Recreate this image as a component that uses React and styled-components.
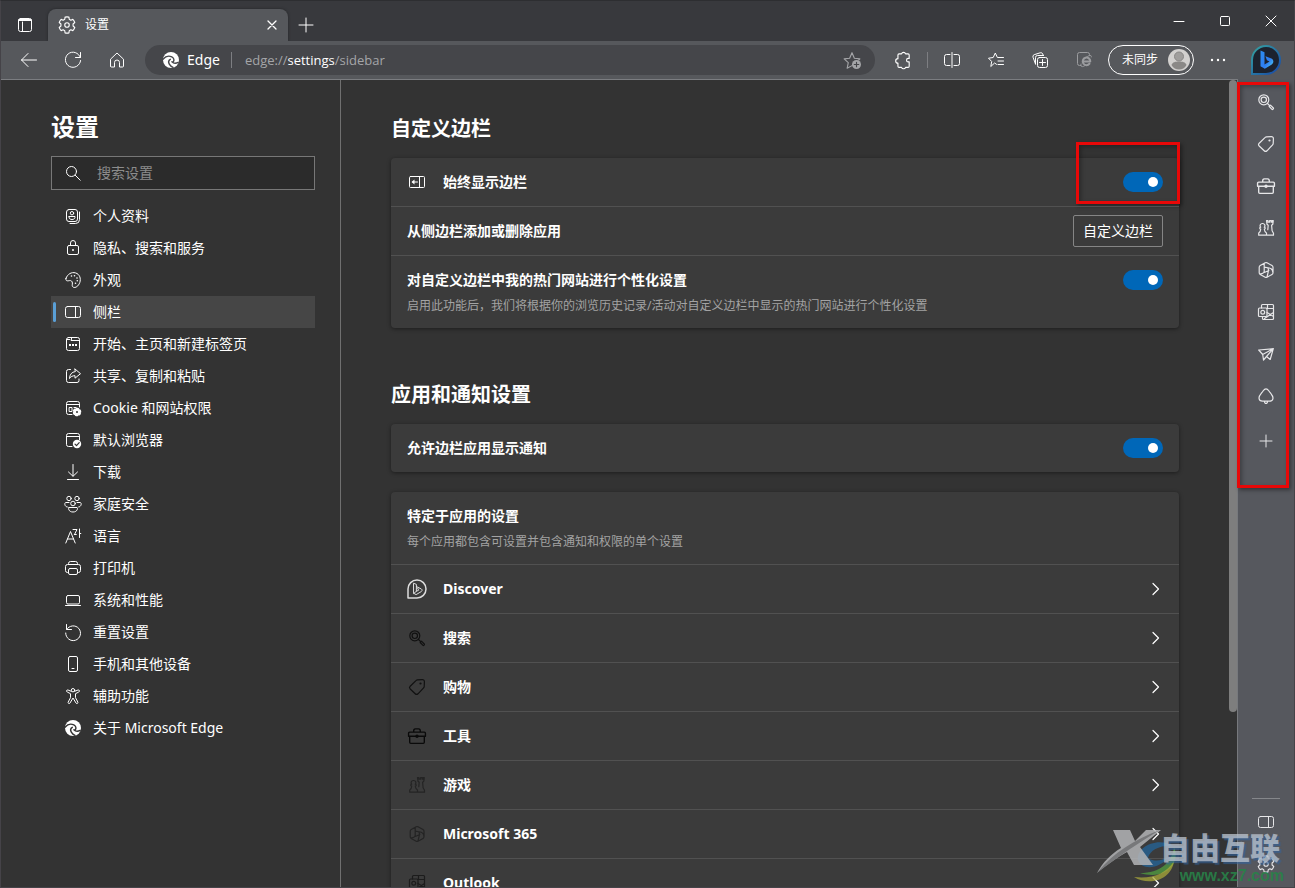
import React from "react";
import styled, { createGlobalStyle, css } from "styled-components";

const GlobalStyle = createGlobalStyle`
  * { box-sizing: border-box; }
  body {
    margin: 0;
    background: #333333;
    color: #ffffff;
    font-family: "Noto Sans", "Noto Sans CJK SC", sans-serif;
    font-size: 14px;
    line-height: 20px;
  }
  button, input { font: inherit; color: inherit; }
  button { border: 0; padding: 0; background: none; cursor: pointer; }
  h1, h2, ul, p { margin: 0; padding: 0; }
  ul { list-style: none; }
  a { color: inherit; text-decoration: none; }
`;

/* ---------- icons ---------- */

const Svg = styled.svg`
  display: block;
  flex: none;
  fill: none;
  stroke: currentColor;
  stroke-width: ${(p) => p.$w || 1};
  stroke-linecap: round;
  stroke-linejoin: round;
  .fill { fill: currentColor; stroke: none; }
  .cut { stroke: ${(p) => p.$cut || "#333333"}; }
`;

const gearPath =
  "M8 .8c.6 0 1.1.1 1.7.2l.3 1.9 1.4.8 1.8-.7c.8.8 1.3 1.7 1.7 2.8l-1.5 1.3v1.8l1.5 1.3c-.4 1.1-.9 2-1.7 2.8l-1.8-.7-1.4.8-.3 1.9c-1.1.3-2.300.3-3.400 0l-.3-1.900-1.400-.8-1.800.7c-.8-.8-1.300-1.700-1.700-2.800l1.500-1.300v-1.800l-1.500-1.300c.4-1.100.9-2 1.700-2.800l1.800.7 1.400-.8.3-1.900c.6-.1 1.100-.2 1.700-.2z";

const glyphs = {
  gear: (
    <>
      <path d={gearPath} />
      <circle cx="8" cy="8" r="2" />
    </>
  ),
  tabs: (
    <>
      <rect x="1.500" y="1.500" width="13" height="13" rx="2" />
      <path d="M1.500 3.500h13M2 2.500h12M5.500 5v9.500" />
    </>
  ),
  close: <path d="M4 4l8 8M12 4l-8 8" />,
  winClose: <path d="M3 3l10 10M13 3L3 13" />,
  plus: <path d="M8 1v14M1 8h14" />,
  smallPlus: <path d="M8 2v12M2 8h12" />,
  min: <path d="M3 8.500h10" />,
  max: <rect x="3.500" y="3.500" width="9" height="9" rx="1" />,
  back: <path d="M15.500 8H.5M7 1.500L.5 8 7 14.500" />,
  reload: <path d="M15.300 5.500A7.600 7.600 0 1 0 15.600 8.500M15.500.5v5h-5" />,
  home: <path d="M1.500 14V7.200L8 1l6.500 6.200V14a1 1 0 0 1-1 1h-3v-4.500a2.500 2.500 0 0 0-5 0V15h-3a1 1 0 0 1-1-1z" />,
  edge: (
    <>
      <circle className="fill" cx="8" cy="8" r="8" />
      <path className="cut" strokeWidth="1.400" d="M0 7.200C2.500 4.300 6.200 3.600 8.800 4.900c2.200 1.100 2.700 3.200 1.500 4.900M7.300 7.300c-1.800 1-2 3-1 4.800.8 1.400 2 2.600 3.700 3.300M8.900 9.800c1.600 1.700 4 1.800 6.300.6" />
    </>
  ),
  starAdd: (
    <>
      <path d="M8 13l-4.300 2.300 1-4.900L1 7l4.900-.6L8 1.500l2.100 4.900L15 7l-1 1" />
      <circle className="fill" cx="12" cy="12" r="4" />
      <path className="cut" d="M12 10v4M10 12h4" />
    </>
  ),
  puzzle: <path d="M4.500 2.500h2.200a1.900 1.900 0 0 1 3.600 0h2.200a1 1 0 0 1 1 1v3.100h-.8a1.500 1.500 0 0 0 0 3.100h.8v3.800a1 1 0 0 1-1 1h-2.200a1.900 1.900 0 0 1-3.600 0H4.500a1 1 0 0 1-1-1v-2.700a2 2 0 0 1 0-4V3.500a1 1 0 0 1 1-1z" />,
  split: <path d="M8 .5v15M6 2.500H2.500a2 2 0 0 0-2 2v7a2 2 0 0 0 2 2H6M10 2.500h3.500a2 2 0 0 1 2 2v7a2 2 0 0 1-2 2H10" />,
  favorites: <path d="M8.500 12.300L6.600 11 2.800 14.500l.9-5L.5 6.200l4.700-.7L7.300 1l2.100 4.500h6.100M10 9h5.500M10 12.500h5.500" />,
  collections: (
    <>
      <rect x="5.500" y="5.500" width="10" height="10" rx="2" />
      <path d="M10.500 7.500v6M7.500 10.500h6M3.500 12L1 5.200A2 2 0 0 1 2.200 2.700L8.200.8A2 2 0 0 1 10.700 2l.7 1.500M3.500 12V5.500a2 2 0 0 1 2-2h6" />
    </>
  ),
  ie: (
    <>
      <path d="M13.500 3V2.500a2 2 0 0 0-2-2h-8a2 2 0 0 0-2 2v9a2 2 0 0 0 2 2H5M5 12c-1 3 1.500 3.500 4 1.500M10 5.500C13 3 16 2.500 15.300 5" />
      <path strokeWidth="2" d="M6.700 9.500h7.600a3.800 3.800 0 1 0-.8 2.200" />
    </>
  ),
  more: (
    <>
      <circle className="fill" cx="2" cy="8" r="1.200" />
      <circle className="fill" cx="8" cy="8" r="1.200" />
      <circle className="fill" cx="14" cy="8" r="1.200" />
    </>
  ),
  search: (
    <>
      <circle cx="6.500" cy="6.500" r="5" />
      <path d="M10.200 10.200l5 5" />
    </>
  ),
  profile: (
    <>
      <rect x="1.500" y="1.500" width="11" height="12" rx="2.500" />
      <path d="M14.500 4v7.500a4 4 0 0 1-4 4H5M4 8.500h6v.8c0 1.400-1.300 2.200-3 2.200s-3-.8-3-2.200z" />
      <circle cx="7" cy="5.200" r="1.700" />
    </>
  ),
  lock: (
    <>
      <rect x="2.500" y="5.500" width="11" height="9" rx="1.500" />
      <path d="M5.500 5.500V3a2.500 2.500 0 0 1 5 0v2.500" />
      <circle className="fill" cx="8" cy="10" r="1" />
    </>
  ),
  palette: (
    <>
      <path d="M1 6.300C2.500 2 6.500-.2 10.500.9c4.400 1.300 5.600 5.800 4.300 9.600-1.300 3.700-4.300 5.700-6.500 4.700-1.800-.9-.8-2.700-.9-4.200C7.300 9.200 6 8.300 4.500 8.600 2.500 9 .2 9.300 1 6.300z" />
      <circle className="fill" cx="6.500" cy="4" r=".8" />
      <circle className="fill" cx="9.500" cy="3.800" r=".8" />
      <circle className="fill" cx="12" cy="6" r=".8" />
      <circle className="fill" cx="12.300" cy="8.800" r=".8" />
      <circle className="fill" cx="10.500" cy="11.300" r=".8" />
    </>
  ),
  sidebar: (
    <>
      <rect x=".5" y="2.500" width="15" height="11" rx="2" />
      <path d="M10.500 2.500v11" />
    </>
  ),
  start: (
    <>
      <rect x="1.500" y="1.500" width="13" height="13" rx="2" />
      <path d="M1.500 3.500H5l1 1h8.500M6.500 1.500v2" />
      <rect className="fill" x="4" y="8" width="2" height="2" />
      <rect className="fill" x="7" y="8" width="2" height="2" />
      <rect className="fill" x="10" y="8" width="2" height="2" />
    </>
  ),
  share: <path d="M5.500 1.500h-2a2 2 0 0 0-2 2v9a2 2 0 0 0 2 2h8.500a2 2 0 0 0 2-2V11M10 1l5.500 4.700L10 10.200V7.700c-2.500 0-4.300.9-5.500 2.800.2-4 2.200-6.500 5.500-6.900z" />,
  cookie: (
    <>
      <path d="M14.500 7V3.500a2 2 0 0 0-2-2h-9a2 2 0 0 0-2 2v9a2 2 0 0 0 2 2H7M1.500 4.500h13" />
      <rect x="4.500" y="7.500" width="2.500" height="4" />
      <path d="M9 7.500h2" />
      <circle className="fill" cx="12" cy="12" r="3.300" />
      <path strokeWidth="2" strokeDasharray="1.400 1.800" d="M12 8.700a3.300 3.300 0 1 1-.01 0" />
      <circle cx="12" cy="12" r="1" fill="#333333" stroke="none" />
    </>
  ),
  browser: (
    <>
      <path d="M14.500 8V3.500a2 2 0 0 0-2-2h-9a2 2 0 0 0-2 2v9a2 2 0 0 0 2 2H7M1.500 4.500h13" />
      <circle className="fill" cx="12" cy="12" r="4.200" />
      <path className="cut" strokeWidth="1.200" d="M10 12.200l1.500 1.500 2.700-3" />
    </>
  ),
  download: <path d="M8 .5V12M3.500 8L8 12.300 12.500 8M2.500 15.500h11" />,
  family: (
    <>
      <circle cx="4" cy="2.500" r="2.200" />
      <circle cx="12" cy="2.500" r="2.200" />
      <circle cx="8" cy="7.500" r="2.300" />
      <path d="M4 11.500h8c1 0 .8 4.500-4 4.500s-5-4.500-4-4.500zM4 6.500H.8C-.9 6.500-.5 11 2.300 11M12 6.500h3.200c1.700 0 1.300 4.500-1.500 4.500" />
    </>
  ),
  language: <path d="M.8 15L5.500 3.500 10.200 15M2.400 11h6.200M8 1.500h4l-2.500 5M14.500 1v8.500M14.500 5.500h1.300M9.300 6.500h2" />,
  printer: (
    <path d="M3.500 12.500h-1a2 2 0 0 1-2-2V6.500a2 2 0 0 1 2-2h11a2 2 0 0 1 2 2v4a2 2 0 0 1-2 2h-1M3.500 4.500v-1a2 2 0 0 1 2-2h5a2 2 0 0 1 2 2v1M5 8.500h6a1.500 1.500 0 0 1 1.500 1.500v3a1.500 1.500 0 0 1-1.500 1.500H5A1.500 1.500 0 0 1 3.500 13v-3A1.500 1.500 0 0 1 5 8.500z" />
  ),
  laptop: (
    <>
      <rect x="1.500" y="3.500" width="13" height="8.500" rx="1.500" />
      <path d="M.5 13.500h15" />
    </>
  ),
  reset: <path d="M1.500.5v5h5M1.700 5.500A7.400 7.400 0 1 1 .7 9" />,
  phone: (
    <>
      <rect x="3.500" y=".5" width="9" height="15" rx="1.500" />
      <path d="M7 12.500h2" />
    </>
  ),
  accessibility: (
    <>
      <circle cx="8" cy="2.200" r="1.700" />
      <path d="M6.300 3.300L3 2c-1.500-.4-2 1.300-.8 2L5.500 5.700v4L3.200 14c-.5 1.500 1.200 2.200 1.800 1L8 10l3 5c.6 1.200 2.300.5 1.800-1l-2.300-4.300v-4L13.800 4c1.200-.7.7-2.400-.8-2L9.700 3.300" />
    </>
  ),
  alwaysShow: (
    <>
      <rect x=".5" y="2.500" width="15" height="11" rx="1" />
      <path d="M10.500 2.500v11M3.500 8h5" />
      <path className="fill" d="M2.500 8l3-2.500v5z" />
    </>
  ),
  lens: (
    <>
      <circle cx="5.800" cy="5.800" r="5" />
      <circle cx="5.800" cy="5.800" r="2.700" />
      <path d="M9.500 9.500l2 2M11.200 12.500l1.300-1.300 2.800 2.800c.6.700-.7 1.900-1.300 1.300z" />
    </>
  ),
  tag: (
    <>
      <path d="M8.500.8l4.800-.2a2 2 0 0 1 2.100 2.100l-.2 4.800a2 2 0 0 1-.6 1.300l-5.600 6a2 2 0 0 1-2.800 0L1.200 10a2 2 0 0 1 0-2.800l6-5.800a2 2 0 0 1 1.300-.6z" />
      <circle className="fill" cx="11.500" cy="4.500" r="1.100" />
    </>
  ),
  toolbox: (
    <>
      <path d="M1.500 4.500h13a1 1 0 0 1 1 1v2.700H.5V5.500a1 1 0 0 1 1-1zM1.500 8.200v5.300a1 1 0 0 0 1 1h11a1 1 0 0 0 1-1V8.200M5 4.200c0-2 .5-2.500 1.500-2.500h3c1 0 1.500.5 1.500 2.500" />
      <circle className="fill" cx="8" cy="8.200" r="1.500" />
    </>
  ),
  chess: (
    <path d="M8.500.7h1.500v1.500h1.600V.7h1.600v1.500h.8V.7h1.300l-.5 3.500-1.200 1 .5 5.500 1.400 2.500v2H9M8.500.7L9 4.200l1.200 1-.4 4.500M4.500 3.500a2.200 2.200 0 0 1 1.800 3.700c1.200.2 1.200 1.800 0 2 .2 1.800.7 3 2.200 3.800v2.200H.7V13c1.500-.8 1.900-2 2-3.800-1.300-.2-1.300-1.800 0-2A2.200 2.200 0 0 1 4.500 3.500z" />
  ),
  m365: (
    <path d="M7.200.8a2 2 0 0 1 1.800 0l5 2.800a2 2 0 0 1 1 1.700v5.400a2 2 0 0 1-1 1.700l-5 2.800a2 2 0 0 1-1.800 0l-5-2.800a2 2 0 0 1-1-1.700V5.300a2 2 0 0 1 1-1.700zM6.200 1.400v7.800c0 1.800-2.200 3-4.500 2.400M6.200 5.200l5 .8c3 .5 3.600 2 3.800 4.700M6.300 10.500l4.500-2-1-2.600M10.500 8.700L9 15" />
  ),
  outlook: (
    <>
      <rect x=".5" y="4" width="8.500" height="8.500" rx="1" />
      <circle cx="4.750" cy="8.250" r="1.900" />
      <path d="M3.500 4V1.500a1 1 0 0 1 1-1h10a1 1 0 0 1 1 1v13a1 1 0 0 1-1 1H5.500a1 1 0 0 1-1-1v-2M9 4.500h6.500M9.500.5v4M9 8.500l6.500 4M15.500 8.500l-9 6" />
    </>
  ),
  plane: <path d="M.7 4l14.600-1.300-3.100 10.800-3.700-3-3 3.500-.8-5.500zM4.700 8.500L15.300 2.700 8.500 10.500M5.500 14l3-3.500" />,
  tree: <path d="M8 .8c1.500 0 2 .8 2.800 2 1.500 2.400 4.500 5 4.200 7.400-.2 2-1.700 3-3.500 3h-7c-1.800 0-3.300-1-3.500-3C.7 7.800 3.700 5.200 5.200 2.800 6 1.600 6.500.8 8 .8zM6.500 13.300c0 1.300.3 2.200 1.500 2.200s1.500-.9 1.500-2.200" />,
  chevron: <path d="M6 2.500L11.500 8 6 13.500" />,
  discover: (
    <>
      <path strokeWidth="1.200" d="M.8 15.200V8A7.200 7.200 0 1 1 8 15.200z" />
      <path strokeWidth=".8" d="M5.500 3.500l2 .8v5.500l-2 1.700zM7.500 6l4 2c.8.500.7 1.500 0 2l-4.200 2.500-1.800-1M7.500 9.800l1.800-.8-.8-1.800" />
    </>
  ),
};

function Icon({ name, size = 16, w, cut }) {
  return (
    <Svg viewBox="0 0 16 16" width={size} height={size} $w={w} $cut={cut} overflow="visible" aria-hidden="true">
      {glyphs[name]}
    </Svg>
  );
}

/* ---------- browser frame ---------- */

const Window = styled.div`
  position: relative;
  display: flex;
  flex-direction: column;
  height: 100vh;
  overflow: hidden;
  border: 1px solid #454348;
  border-top-color: #2d2e31;
  background: #333333;
`;

const TitleBar = styled.header`
  display: flex;
  flex: none;
  height: 40px;
  background: #38393d;
`;

const FrameButton = styled.button`
  display: flex;
  align-items: center;
  justify-content: center;
  flex: none;
  width: ${(p) => p.$width || 46}px;
  height: ${(p) => p.$height || 40}px;
`;

const Tab = styled.div`
  display: flex;
  align-items: center;
  align-self: flex-end;
  width: 240px;
  height: 32px;
  padding: 0 8px 0 10px;
  gap: 9px;
  border-radius: 8px 8px 0 0;
  background: #56585c;
  box-shadow: 0 0 3px #242528;
  font-size: 12px;
`;

const TabTitle = styled.span`
  flex: 1;
`;

const Spacer = styled.div`
  flex: 1;
`;

const Toolbar = styled.div`
  position: relative;
  display: flex;
  align-items: center;
  flex: none;
  height: 38px;
  padding: 0 2px 0 6px;
  background: #56585c;
`;

const ToolButton = styled.button`
  display: flex;
  align-items: center;
  justify-content: center;
  flex: none;
  width: ${(p) => p.$width || 44}px;
  height: 36px;
  color: ${(p) => (p.$dim ? "#9b9c9f" : "#ffffff")};
`;

const AddressBar = styled.div`
  display: flex;
  align-items: center;
  flex: 1;
  height: 30px;
  margin: 0 6px;
  padding: 0 14px 0 18px;
  border-radius: 15px;
  background: #45464a;
  color: #a4a5a8;
`;

const SiteIcon = styled.span`
  color: #ffffff;
`;

const SiteName = styled.span`
  padding: 0 11px 0 8px;
  color: #ffffff;
`;

const Url = styled.span`
  flex: 1;
  padding-left: 13px;
  font-family: "Open Sans", sans-serif;
  font-size: 13px;
  b { font-weight: 400; color: #ffffff; }
`;

const Divider = styled.span`
  flex: none;
  width: 1px;
  height: 16px;
  margin: 0 ${(p) => p.$gap || 0}px;
  background: #7d7e82;
`;

const Profile = styled.button`
  display: flex;
  align-items: center;
  justify-content: space-between;
  flex: none;
  width: 86px;
  height: 30px;
  margin: 0 2px;
  padding: 0 2px 0 13px;
  border: 1px solid #ffffff;
  border-radius: 15px;
  font-size: 12px;
`;

const Body = styled.div`
  display: flex;
  flex: 1;
  min-height: 0;
`;

const Page = styled.div`
  display: flex;
  flex: 1;
  min-width: 0;
  border-top: 1px solid #7b7d81;
  border-right: 1px solid #77797d;
`;

/* ---------- settings navigation ---------- */

const Nav = styled.nav`
  flex: none;
  width: 340px;
  padding: 31px 25px 0 50px;
  border-right: 1px solid #707070;
`;

const NavTitle = styled.h1`
  font-size: 24px;
  line-height: 32px;
`;

const SearchBox = styled.label`
  display: flex;
  align-items: center;
  gap: 16px;
  height: 34px;
  margin: 13px 0 10px;
  padding: 0 13px;
  border: 1px solid #777777;
  background: #2b2b2b;
`;

const SearchInput = styled.input`
  flex: 1;
  min-width: 0;
  padding: 0;
  border: 0;
  outline: 0;
  background: none;
  &::placeholder { color: #8c8c8c; opacity: 1; }
`;

const NavItem = styled.a`
  display: flex;
  align-items: center;
  gap: 12px;
  height: 32px;
  padding-left: 14px;
  ${(p) =>
    p.$active &&
    css`
      position: relative;
      background: #464646;
      &::before {
        content: "";
        position: absolute;
        left: 2px;
        top: 6px;
        bottom: 6px;
        width: 3px;
        border-radius: 2px;
        background: #5a9fd6;
      }
    `}
`;

/* ---------- settings content ---------- */

const Main = styled.main`
  flex: 1;
  min-width: 0;
  overflow: hidden;
  padding: 35px 50px 0;
`;

const SectionTitle = styled.h2`
  margin-bottom: 15px;
  font-size: 20px;
  line-height: 28px;
`;

const Section = styled.section`
  margin-bottom: 53px;
`;

const Card = styled.div`
  margin-bottom: 20px;
  border-radius: 4px;
  background: #3b3b3b;
  box-shadow: 0 1px 4px rgba(0, 0, 0, 0.45);
`;

const Row = styled.div`
  position: relative;
  display: flex;
  align-items: center;
  gap: 16px;
  height: 48px;
  padding: 0 16px;
  & + & { height: 49px; border-top: 1px solid #515151; }
`;

const TallRow = styled.div`
  display: flex;
  align-items: flex-start;
  justify-content: space-between;
  padding: 14px 16px 12px;
  ${Row} + & { border-top: 1px solid #515151; }
`;

const AppRow = styled.button`
  display: flex;
  align-items: center;
  gap: 16px;
  width: 100%;
  height: 49px;
  padding: 0 16px;
  border-top: 1px solid #515151;
  text-align: left;
`;

const IconSlot = styled.span`
  display: flex;
  justify-content: center;
  flex: none;
  width: 20px;
  color: ${(p) => p.$color || "#ffffff"};
`;

const Label = styled.span`
  flex: 1;
  font-weight: 700;
`;

const Hint = styled.p`
  padding-top: 6px;
  color: #a3a3a3;
  font-size: 12px;
`;

const Toggle = styled.input.attrs({ type: "checkbox", role: "switch" })`
  appearance: none;
  display: flex;
  align-items: center;
  flex: none;
  width: 40px;
  height: 20px;
  margin: 0;
  padding: 0 5px;
  border-radius: 10px;
  background: #7a7a7a;
  &::before {
    content: "";
    width: 10px;
    height: 10px;
    border-radius: 50%;
    background: #ffffff;
  }
  &:checked { justify-content: flex-end; background: #0067b8; }
`;

const OutlineButton = styled.button`
  width: 90px;
  height: 32px;
  border: 1px solid #858585;
  border-radius: 2px;
`;

const ScrollTrack = styled.div`
  flex: none;
  width: 8px;
`;

const ScrollThumb = styled.div`
  height: calc(100% - 175px);
  border-radius: 4px;
  background: #7e7e7e;
`;

/* ---------- right app bar ---------- */

const AppBar = styled.aside`
  position: relative;
  display: flex;
  flex-direction: column;
  align-items: center;
  flex: none;
  width: 56px;
  padding: 2px 0;
  background: #56585e;
  color: #e6e6e8;
`;

const AppBarButton = styled.button`
  display: flex;
  align-items: center;
  justify-content: center;
  width: 42px;
  height: 42px;
`;

const AddButton = styled(AppBarButton)`
  margin-top: 3px;
`;

const AppBarRule = styled.div`
  width: 28px;
  height: 1px;
  margin-bottom: 2px;
  background: #85878b;
`;

/* ---------- overlays ---------- */

const Marker = styled.div`
  position: absolute;
  border: 3px solid #e80808;
  box-shadow: 2px 2px 4px rgba(0, 0, 0, 0.4), inset 2px 2px 4px rgba(0, 0, 0, 0.3);
  pointer-events: none;
`;

const ToggleMarker = styled(Marker)`
  top: -16px;
  right: -1px;
  width: 104px;
  height: 62px;
`;

const BarMarker = styled(Marker)`
  top: 3px;
  left: -1px;
  right: 5px;
  height: 406px;
`;

const Watermark = styled.div`
  position: absolute;
  right: 10px;
  bottom: 1px;
  display: flex;
  align-items: flex-start;
  width: 188px;
  height: 58px;
  pointer-events: none;
`;

const WatermarkLogo = styled.svg`
  position: absolute;
  left: 0;
  top: 0;
`;

const WatermarkText = styled.div`
  position: relative;
  display: flex;
  flex-direction: column;
  align-items: flex-end;
  flex: 1;
`;

const WatermarkName = styled.span`
  padding-right: 4px;
  font-size: 30px;
  font-weight: 900;
  line-height: 40px;
  color: rgba(190, 198, 208, 0.75);
  text-shadow: 2px 2px 1px rgba(50, 100, 160, 0.6);
`;

const WatermarkSite = styled.span`
  font-family: "Liberation Sans", sans-serif;
  font-size: 16px;
  font-weight: 700;
  line-height: 16px;
  color: rgba(40, 130, 72, 0.9);
`;

/* ---------- data ---------- */

const navItems = [
  ["profile", "个人资料"],
  ["lock", "隐私、搜索和服务"],
  ["palette", "外观"],
  ["sidebar", "侧栏"],
  ["start", "开始、主页和新建标签页"],
  ["share", "共享、复制和粘贴"],
  ["cookie", "Cookie 和网站权限"],
  ["browser", "默认浏览器"],
  ["download", "下载"],
  ["family", "家庭安全"],
  ["language", "语言"],
  ["printer", "打印机"],
  ["laptop", "系统和性能"],
  ["reset", "重置设置"],
  ["phone", "手机和其他设备"],
  ["accessibility", "辅助功能"],
  ["edge", "关于 Microsoft Edge"],
];

const apps = [
  ["discover", "Discover", "#dddddd", 20],
  ["lens", "搜索", "#111111", 16],
  ["tag", "购物", "#111111", 16],
  ["toolbox", "工具", "#0a0a0a", 18],
  ["chess", "游戏", "#242424", 16],
  ["m365", "Microsoft 365", "#242424", 16],
  ["outlook", "Outlook", "#1c1c1c", 16],
];

const barApps = [
  ["lens", "搜索", 16],
  ["tag", "购物", 16],
  ["toolbox", "工具", 18],
  ["chess", "游戏", 16],
  ["m365", "Microsoft 365", 16],
  ["outlook", "Outlook", 16],
  ["plane", "Drop", 16],
  ["tree", "Tree", 16],
];

function Avatar() {
  return (
    <svg width="24" height="24" viewBox="0 0 24 24" aria-hidden="true">
      <circle cx="12" cy="12" r="11" fill="#d2d0ce" />
      <circle cx="12" cy="8.500" r="4.500" fill="#a09e9c" stroke="#8a8886" />
      <path d="M4.500 17c1-3 4-3.500 7.500-3.500s6.500.5 7.500 3.500c-1.500 3-4.500 4.500-7.500 4.500S6 20 4.500 17z" fill="#8a8886" />
    </svg>
  );
}

function BingLogo() {
  return (
    <svg width="32" height="32" viewBox="0 0 32 32" aria-hidden="true">
      <defs>
        <linearGradient id="ring" x1="0" y1="0" x2="1" y2="1">
          <stop offset="0" stopColor="#35a3a0" />
          <stop offset="1" stopColor="#1747a8" />
        </linearGradient>
        <linearGradient id="mark" x1="0" y1="0" x2="1" y2="1">
          <stop offset="0" stopColor="#2b8cf0" />
          <stop offset=".6" stopColor="#2f7df0" />
          <stop offset="1" stopColor="#50d8f0" />
        </linearGradient>
      </defs>
      <path d="M2 30V16A14 14 0 1 1 16 30z" fill="#1c222e" stroke="url(#ring)" strokeWidth="2" />
      <path d="M10.500 6.500l4 1.700v12.300l5-3-2.500-1.200-1.600-4 6 2.200c2.300.9 2.700 4.500.4 6l-7 4.300-4.300-2.600z" fill="url(#mark)" />
    </svg>
  );
}

export default function App() {
  return (
    <>
      <GlobalStyle />
      <Window>
        <TitleBar>
          <FrameButton $width={47} $height={48} aria-label="标签操作"><Icon name="tabs" /></FrameButton>
          <Tab>
            <Icon name="gear" size={18} />
            <TabTitle>设置</TabTitle>
            <FrameButton $width={16} $height={16} aria-label="关闭标签页"><Icon name="close" w={1.3} /></FrameButton>
          </Tab>
          <FrameButton $width={36} $height={48} aria-label="新建标签页"><Icon name="plus" /></FrameButton>
          <Spacer />
          <FrameButton aria-label="最小化"><Icon name="min" /></FrameButton>
          <FrameButton aria-label="最大化"><Icon name="max" /></FrameButton>
          <FrameButton aria-label="关闭"><Icon name="winClose" /></FrameButton>
        </TitleBar>

        <Toolbar>
          <ToolButton aria-label="返回"><Icon name="back" /></ToolButton>
          <ToolButton aria-label="刷新"><Icon name="reload" /></ToolButton>
          <ToolButton aria-label="主页"><Icon name="home" /></ToolButton>
          <AddressBar>
            <SiteIcon><Icon name="edge" cut="#45464a" /></SiteIcon>
            <SiteName>Edge</SiteName>
            <Divider />
            <Url>edge://<b>settings</b>/sidebar</Url>
            <Icon name="starAdd" size={18} cut="#45464a" />
          </AddressBar>
          <ToolButton aria-label="扩展"><Icon name="puzzle" size={18} /></ToolButton>
          <Divider $gap={2} />
          <ToolButton aria-label="分屏"><Icon name="split" /></ToolButton>
          <ToolButton aria-label="收藏夹"><Icon name="favorites" /></ToolButton>
          <ToolButton aria-label="集锦"><Icon name="collections" /></ToolButton>
          <ToolButton $dim aria-label="IE 模式"><Icon name="ie" /></ToolButton>
          <Profile><span>未同步</span><Avatar /></Profile>
          <ToolButton aria-label="更多"><Icon name="more" /></ToolButton>
          <ToolButton $width={52} aria-label="必应"><BingLogo /></ToolButton>
        </Toolbar>

        <Body>
          <Page>
            <Nav>
              <NavTitle>设置</NavTitle>
              <SearchBox>
                <Icon name="search" />
                <SearchInput type="text" placeholder="搜索设置" aria-label="搜索设置" />
              </SearchBox>
              <ul>
                {navItems.map(([icon, text]) => (
                  <li key={icon}>
                    <NavItem href={"#" + icon} $active={icon === "sidebar"}>
                      <Icon name={icon} />
                      {text}
                    </NavItem>
                  </li>
                ))}
              </ul>
            </Nav>

            <Main>
              <Section>
                <SectionTitle>自定义边栏</SectionTitle>
                <Card>
                  <Row>
                    <IconSlot><Icon name="alwaysShow" /></IconSlot>
                    <Label as="label" htmlFor="always-show">始终显示边栏</Label>
                    <Toggle id="always-show" defaultChecked />
                    <ToggleMarker />
                  </Row>
                  <Row>
                    <Label>从侧边栏添加或删除应用</Label>
                    <OutlineButton>自定义边栏</OutlineButton>
                  </Row>
                  <TallRow>
                    <div>
                      <Label as="label" htmlFor="personalize">对自定义边栏中我的热门网站进行个性化设置</Label>
                      <Hint>启用此功能后，我们将根据你的浏览历史记录/活动对自定义边栏中显示的热门网站进行个性化设置</Hint>
                    </div>
                    <Toggle id="personalize" defaultChecked />
                  </TallRow>
                </Card>
              </Section>

              <Section>
                <SectionTitle>应用和通知设置</SectionTitle>
                <Card>
                  <Row>
                    <Label as="label" htmlFor="notify">允许边栏应用显示通知</Label>
                    <Toggle id="notify" defaultChecked />
                  </Row>
                </Card>
                <Card>
                  <TallRow>
                    <div>
                      <Label>特定于应用的设置</Label>
                      <Hint>每个应用都包含可设置并包含通知和权限的单个设置</Hint>
                    </div>
                  </TallRow>
                  {apps.map(([icon, text, color, size]) => (
                    <AppRow key={icon}>
                      <IconSlot $color={color}><Icon name={icon} size={size} w={1.2} /></IconSlot>
                      <Label>{text}</Label>
                      <Icon name="chevron" w={1.2} />
                    </AppRow>
                  ))}
                </Card>
              </Section>
            </Main>
            <ScrollTrack><ScrollThumb /></ScrollTrack>
          </Page>

          <AppBar>
            {barApps.map(([icon, text, size]) => (
              <AppBarButton key={icon} aria-label={text}><Icon name={icon} size={size} w={1.2} /></AppBarButton>
            ))}
            <AddButton aria-label="添加"><Icon name="smallPlus" /></AddButton>
            <Spacer />
            <AppBarRule />
            <AppBarButton aria-label="边栏"><Icon name="sidebar" size={16} /></AppBarButton>
            <AppBarButton aria-label="设置"><Icon name="gear" size={18} /></AppBarButton>
            <BarMarker />
          </AppBar>
        </Body>

        <Watermark>
          <WatermarkLogo width="90" height="58" viewBox="0 0 90 58" aria-hidden="true">
            <path d="M42 32c-2-12 18-24 36-14-14-1-24 4-26 12 6 4 14 3 20-1-8 12-26 14-30 3z" fill="#27608f" opacity=".85" />
            <path d="M44 45c20 0 32-10 34-26 7 16-8 34-34 26z" fill="#4f9440" opacity=".85" />
            <path d="M38 49c18 2 32-3 40-16-2 18-24 26-40 16z" fill="#aaa83a" opacity=".75" />
            <path d="M17 2h17l5 11L50 2h15L44 19l13 18H38L31 24C22 29 10 37 1 45 7 34 15 26 25 20z" fill="#b4b5b7" opacity=".85" />
            <path d="M1 45C18 24 38 12 64 2 44 14 24 27 1 45z" fill="#77787a" />
          </WatermarkLogo>
          <WatermarkText>
            <WatermarkName>自由互联</WatermarkName>
            <WatermarkSite>www.xz7.com</WatermarkSite>
          </WatermarkText>
        </Watermark>
      </Window>
    </>
  );
}
